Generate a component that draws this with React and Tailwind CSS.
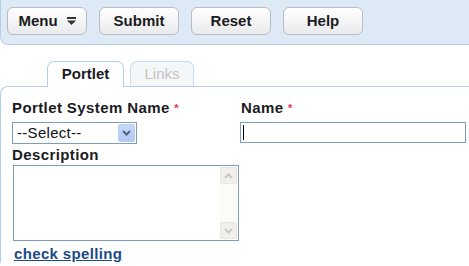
import React from 'react';

function ToolButton({ children }) {
  return (
    <button className="w-[80px] h-[28px] rounded-[6px] border border-[#b9bcc0] bg-gradient-to-b from-white to-[#e9eaec] text-[15px] font-bold text-[#1b1b22] flex items-center justify-center gap-[9px]">
      {children}
    </button>
  );
}

export default function App() {
  return (
    <div className="w-[469px] h-[266px] bg-white overflow-hidden font-['Liberation_Sans',Arial,sans-serif] text-[#222]">
      {/* toolbar */}
      <div className="h-[45px] bg-[#dee9f6] border-b border-l border-[#b6cde8] rounded-bl-[8px] flex items-start pt-[7px] pl-[6px] gap-[12px]">
        <ToolButton>
          <span>Menu</span>
          <svg width="9" height="9" viewBox="0 0 9 9">
            <rect x="0" y="0" width="9" height="2" fill="#333" />
            <path d="M0 3.5h9L4.5 8z" fill="#333" />
          </svg>
        </ToolButton>
        <ToolButton>Submit</ToolButton>
        <ToolButton>Reset</ToolButton>
        <ToolButton>Help</ToolButton>
      </div>

      {/* tabs */}
      <div className="flex items-end gap-[6px] pl-[47px] pt-[14px] h-[41px]">
        <div className="w-[77px] h-[26px] rounded-t-[7px] border border-b-0 border-[#b3d0ee] bg-white flex items-center justify-center text-[15px] font-bold text-[#1b1b22] -mb-px relative z-10">
          Portlet
        </div>
        <div className="w-[64px] h-[25px] rounded-t-[7px] border border-b-0 border-[#c6dcf2] bg-[#f4f6f8] flex items-center justify-center text-[15px] text-[#c3c3c3]">
          Links
        </div>
      </div>

      {/* panel */}
      <div className="border-t border-l border-[#b3d0ee] rounded-tl-[8px] pl-[11px] pt-[12px]">
        <div className="grid grid-cols-[228px_226px]">
          <div className="flex flex-col">
            <div className="h-[23px] text-[15px] tracking-[0.4px] font-bold text-[#1b1b22] leading-[18px]">
              Portlet System Name <span className="text-[#e8304a] text-[11px] align-top">*</span>
            </div>
            <div className="w-[125px] h-[22px] border border-[#7f9db9] flex items-center">
              <span className="flex-1 pl-[4px] text-[15px] tracking-[0.3px] text-[#111]">--Select--</span>
              <div className="w-[17px] h-[18px] mr-[1px] rounded-[2px] bg-gradient-to-b from-[#c7d7f7] to-[#b2c8f2] border border-[#b9cdf3] flex items-center justify-center">
                <svg width="9" height="6" viewBox="0 0 9 6">
                  <path d="M1 1l3.5 3.5L8 1" stroke="#4d6185" strokeWidth="2" fill="none" />
                </svg>
              </div>
            </div>
          </div>
          <div className="flex flex-col">
            <div className="h-[23px] pl-px text-[15px] tracking-[0.4px] font-bold text-[#1b1b22] leading-[18px]">
              Name <span className="text-[#e8304a] text-[11px] align-top">*</span>
            </div>
            <div className="w-[226px] h-[21px] border border-[#7f9db9] flex items-center pl-[2px]">
              <div className="w-px h-[15px] bg-black" />
            </div>
          </div>
        </div>

        <div className="mt-[2px] h-[19px] text-[15px] tracking-[0.4px] font-bold text-[#1b1b22] leading-[17px]">Description</div>
        <div className="ml-px w-[226px] h-[76px] border border-[#7f9db9] flex justify-end p-[1px]">
          <div className="w-[17px] h-full bg-[#fcfcf7] flex flex-col justify-between">
            <div className="h-[17px] rounded-[2px] border border-[#e6e6de] bg-[#f0f0ea] flex items-center justify-center">
              <svg width="9" height="6" viewBox="0 0 9 6">
                <path d="M1 5l3.5-3.5L8 5" stroke="#c9c9c2" strokeWidth="2" fill="none" />
              </svg>
            </div>
            <div className="h-[17px] rounded-[2px] border border-[#e6e6de] bg-[#f0f0ea] flex items-center justify-center">
              <svg width="9" height="6" viewBox="0 0 9 6">
                <path d="M1 1l3.5 3.5L8 1" stroke="#c9c9c2" strokeWidth="2" fill="none" />
              </svg>
            </div>
          </div>
        </div>
        <a className="block ml-[2px] mt-[4px] text-[15px] tracking-[0.35px] font-bold text-[#1c4a85] underline leading-[18px]">check spelling</a>
      </div>
    </div>
  );
}
